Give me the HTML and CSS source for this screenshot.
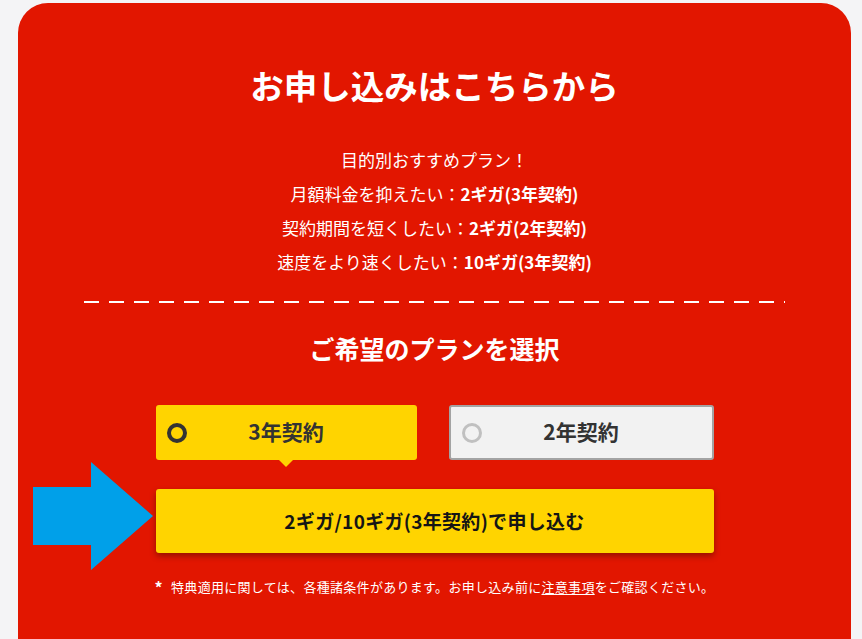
FILE: index.html
```html
<!DOCTYPE html>
<html lang="ja">
<head>
<meta charset="utf-8">
<link rel="stylesheet" href="styles.css">
</head>
<body>
<section class="card">
  <h1 class="title">お申し込みはこちらから</h1>
  <div class="recommend">
    <p>目的別おすすめプラン！</p>
    <p>月額料金を抑えたい：<b>2ギガ(3年契約)</b></p>
    <p>契約期間を短くしたい：<b>2ギガ(2年契約)</b></p>
    <p>速度をより速くしたい：<b>10ギガ(3年契約)</b></p>
  </div>
  <div class="dash"></div>
  <h2 class="subtitle">ご希望のプランを選択</h2>
  <div class="plans">
    <div class="plan plan-active"><span class="radio"></span>3年契約</div>
    <div class="plan plan-off"><span class="radio"></span>2年契約</div>
  </div>
  <div class="apply-row">
    <svg class="arrow" width="122" height="110" viewBox="0 0 122 110">
      <path d="M0 25 H58 V0 L120 54 L58 108 V83 H0 Z" fill="#00a0e9"/>
    </svg>
    <div class="apply">2ギガ/10ギガ(3年契約)で申し込む</div>
  </div>
  <p class="note"><span class="ast">*</span>特典適用に関しては、各種諸条件があります。お申し込み前に<u>注意事項</u>をご確認ください。</p>
</section>
</body>
</html>
```
FILE: styles.css
```css
html, body {
  margin: 0;
  padding: 0;
  background: #f4f4f6;
  font-family: "Noto Sans CJK JP", "Noto Sans", sans-serif;
}
.card {
  margin: 3px 11px 0 18px;
  width: 833px;
  height: 700px;
  background: #e21600;
  border-radius: 30px 30px 0 0;
  padding-top: 58px;
  box-sizing: border-box;
  color: #fff;
  text-align: center;
}
.title {
  margin: 0;
  font-size: 33.5px;
  line-height: 48px;
  font-weight: 700;
}
.recommend {
  margin-top: 34px;
}
.recommend p {
  margin: 0;
  font-size: 17px;
  line-height: 34px;
}
.recommend b {
  font-weight: 700;
}
.dash {
  margin: 22px 66px 0;
  height: 2px;
  background: repeating-linear-gradient(to right, #fff 0 15px, transparent 15px 25px);
}
.subtitle {
  margin: 27px 0 0;
  font-size: 25px;
  line-height: 36px;
  font-weight: 700;
}
.plans {
  margin: 39px auto 0;
  width: 558px;
  display: flex;
  gap: 32px;
}
.plan {
  position: relative;
  flex: 1;
  height: 55px;
  padding-bottom: 4px;
  box-sizing: border-box;
  border-radius: 3px;
  display: flex;
  align-items: center;
  justify-content: center;
  font-size: 21px;
  font-weight: 700;
  color: #333;
}
.radio {
  position: absolute;
  left: 11px;
  top: 50%;
  width: 20px;
  height: 20px;
  margin-top: -10px;
  box-sizing: border-box;
  border-radius: 50%;
}
.plan-active {
  background: #ffd400;
}
.plan-active .radio {
  border: 4px solid #333;
}
.plan-active::after {
  content: "";
  position: absolute;
  left: 50%;
  bottom: -7px;
  margin-left: -7px;
  border-left: 7px solid transparent;
  border-right: 7px solid transparent;
  border-top: 7px solid #ffd400;
}
.plan-off {
  background: #f2f2f2;
  border: 2px solid #a3a3a3;
}
.plan-off .radio {
  left: 11px;
  border: 3px solid #c0c0c0;
}
.apply-row {
  position: relative;
  margin: 29px auto 0;
  width: 558px;
}
.arrow {
  position: absolute;
  left: -123px;
  top: -27px;
}
.apply {
  height: 64px;
  padding-bottom: 2px;
  box-sizing: border-box;
  border-radius: 3px;
  background: #ffd400;
  box-shadow: 0 3px 6px rgba(0, 0, 0, 0.35);
  display: flex;
  align-items: center;
  justify-content: center;
  font-size: 19px;
  letter-spacing: 0.3px;
  font-weight: 700;
  color: #151515;
}
.note {
  margin: 24px 0 0;
  font-size: 13px;
  letter-spacing: 0.3px;
  line-height: 20px;
}
.ast {
  display: inline-block;
  font-size: 16px;
  font-weight: 700;
  line-height: 20px;
  vertical-align: top;
  margin-right: 8px;
}
.note u {
  text-underline-offset: 2px;
}
```
